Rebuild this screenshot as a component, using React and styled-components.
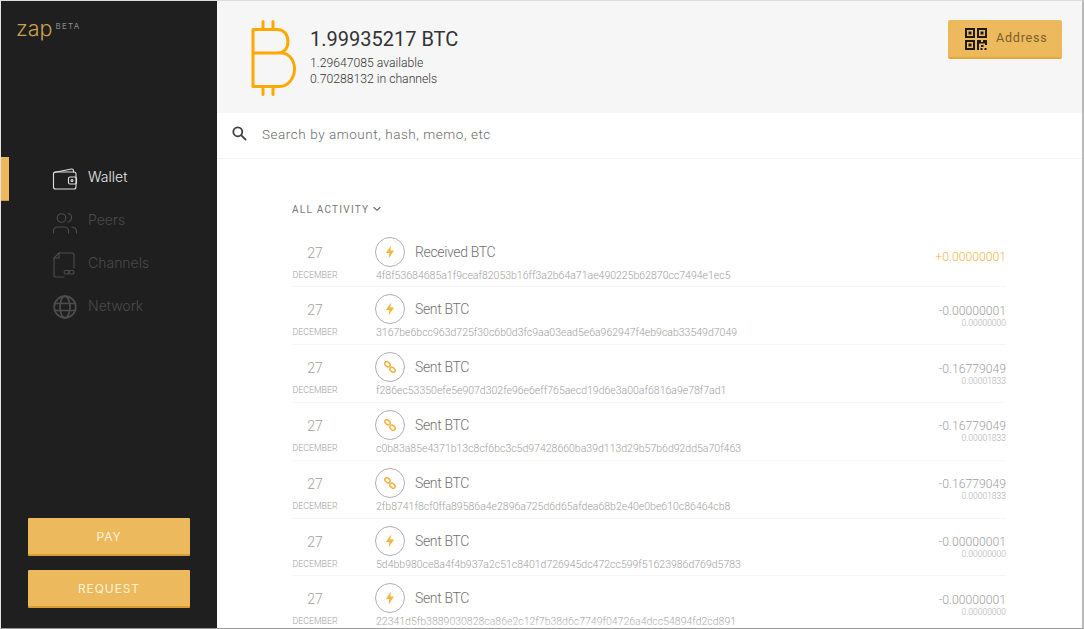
import React from 'react';
import styled, { createGlobalStyle } from 'styled-components';

const GlobalStyle = createGlobalStyle`
  html, body {
    margin: 0;
    padding: 0;
    background: #fff;
    overflow: hidden;
  }
  * {
    box-sizing: border-box;
  }
`

const Frame = styled.div`
  display: flex;
  width: 1084px;
  height: 629px;
  overflow: hidden;
  position: relative;
  font-family: Roboto, "Liberation Sans", sans-serif;
  background: #fff;
  border-top: 1px solid #dcdcdc;
  border-left: 1px solid #e4e4e4;
  border-right: 2px solid #b9b9b9;
  border-bottom: 1px solid #9a9a9a;
`

const Sidebar = styled.aside`
  display: flex;
  flex-direction: column;
  flex: 0 0 216px;
  background: #1f1f1f;
`

const Brand = styled.div`
  display: flex;
  align-items: flex-start;
  padding: 13px 0 0 15px;
  height: 156px;
`

const BrandName = styled.span`
  font-family: Inter, Roboto, sans-serif;
  font-size: 21.5px;
  font-weight: 300;
  line-height: 28px;
  color: #c9a04f;
`

const BrandTag = styled.span`
  font-family: Inter, Roboto, sans-serif;
  font-size: 8px;
  line-height: 10px;
  letter-spacing: 1.3px;
  margin: 7px 0 0 3px;
  color: #8a8a8a;
`

const Nav = styled.nav`
  display: flex;
  flex-direction: column;
`

const NavItem = styled.div`
  display: flex;
  align-items: center;
  height: 43px;
  padding: 0 0 4px 50px;
  gap: 9px;
  position: relative;
  font-family: Inter, Roboto, sans-serif;
  font-size: 14px;
  font-weight: 300;
  color: ${props => (props.active ? '#e8e8e8' : '#4a4a4a')};

  &::before {
    content: '';
    display: ${props => (props.active ? 'block' : 'none')};
    position: absolute;
    left: 0;
    top: 0;
    width: 8px;
    height: 43px;
    background: #ecb95c;
    border-bottom: 1px solid #c99a3e;
  }
`

const NavIcon = styled.svg`
  width: 28px;
  height: 28px;
  margin-top: 2px;
  fill: none;
  stroke: ${props => (props.active ? '#e0e0e0' : '#4d4d4d')};
  stroke-width: ${props => props.weight || 1.1};
  stroke-linecap: round;
  stroke-linejoin: round;
`

const SideActions = styled.div`
  display: flex;
  flex-direction: column;
  gap: 14px;
  margin-top: auto;
  padding: 0 27px 20px;
`

const ActionButton = styled.div`
  display: flex;
  align-items: center;
  justify-content: center;
  height: 38px;
  background: #ecb95c;
  border-bottom: 2px solid #dc9f2f;
  border-radius: 1px;
  font-family: Inter, Roboto, sans-serif;
  font-size: 12px;
  letter-spacing: 0.9px;
  color: #fdf3dc;
`

const Main = styled.main`
  display: flex;
  flex-direction: column;
  flex: 1;
  min-width: 0;
`

const Header = styled.header`
  display: flex;
  flex: 0 0 112px;
  padding: 19px 20px 0 33px;
  background: #f6f6f6;
`

const BtcLogo = styled.svg`
  width: 47px;
  height: 76px;
  fill: none;
  stroke: #ffa800;
  stroke-width: 3;
  stroke-linecap: round;
  stroke-linejoin: round;
`

const Balance = styled.div`
  display: flex;
  flex-direction: column;
  margin: 7px 0 0 13px;
`

const BalanceTotal = styled.div`
  font-size: 20px;
  line-height: 24px;
  color: #333;
  margin-bottom: 4px;
`

const BalanceLine = styled.div`
  font-size: 12.2px;
  font-weight: 300;
  line-height: 16px;
  color: #333;
`

const AddressButton = styled.div`
  display: flex;
  align-items: center;
  gap: 9px;
  width: 114px;
  height: 39px;
  margin-left: auto;
  padding-left: 17px;
  background: #ecb95c;
  border-bottom: 2px solid #e5a93a;
  border-radius: 2px;
  font-size: 12.5px;
  letter-spacing: 0.8px;
  color: #7a6030;
`

const AddressLabel = styled.span`
  margin-bottom: 2px;
`

const SearchBar = styled.div`
  display: flex;
  flex: 0 0 46px;
  align-items: center;
  gap: 15px;
  padding: 0 0 4px 15px;
  border-bottom: 1px solid #f1f1f1;
  font-size: 13.5px;
  font-weight: 300;
  letter-spacing: 0.55px;
  color: #6a6a6a;
`

const Activity = styled.section`
  display: flex;
  flex-direction: column;
  padding: 44px 76px 0 75px;
`

const ActivityLabel = styled.div`
  display: flex;
  align-items: center;
  gap: 4px;
  height: 12px;
  margin-bottom: 14.7px;
  font-size: 10px;
  letter-spacing: 1.25px;
  color: #777;
`

const Row = styled.div`
  display: flex;
  flex: 0 0 57.8px;
  height: 57.8px;
  padding-top: 7px;
  border-bottom: 1px solid #f6f6f6;
`

const DateCol = styled.div`
  display: flex;
  flex-direction: column;
  align-items: center;
  flex: 0 0 46px;
`

const Day = styled.div`
  font-size: 14px;
  font-weight: 300;
  line-height: 16px;
  margin-top: 8px;
  color: #a0a0a0;
`

const Month = styled.div`
  font-size: 8.8px;
  font-weight: 300;
  line-height: 10px;
  margin-top: 9px;
  color: #a0a0a0;
  white-space: nowrap;
`

const Details = styled.div`
  display: flex;
  flex-direction: column;
  margin-left: 38px;
`

const TitleLine = styled.div`
  display: flex;
  align-items: center;
  gap: 10px;
  height: 30px;
  margin-left: -1px;
  font-size: 14px;
  font-weight: 300;
  letter-spacing: -0.35px;
  color: #707070;
`

const TypeIcon = styled.div`
  display: flex;
  align-items: center;
  justify-content: center;
  width: 30px;
  height: 30px;
  border: 1px solid #b0b0b0;
  border-radius: 50%;
`

const Hash = styled.div`
  font-size: 10.5px;
  font-weight: 300;
  line-height: 12px;
  margin-top: 3px;
  color: #a0a0a0;
  white-space: nowrap;
`

const Amounts = styled.div`
  display: flex;
  flex-direction: column;
  align-items: flex-end;
  justify-content: center;
  margin-left: auto;
  padding-bottom: 8px;
`

const Amount = styled.div`
  font-size: 12.2px;
  font-weight: 300;
  line-height: 15px;
  color: ${props => (props.received ? '#f0b44a' : '#a0a0a0')};
`

const Fee = styled.div`
  font-size: 8.5px;
  font-weight: 300;
  line-height: 8px;
  color: #aaa;
`

const BottomFade = styled.div`
  position: absolute;
  left: 340px;
  bottom: 0;
  width: 420px;
  height: 8px;
  background: radial-gradient(ellipse at bottom, rgba(255, 255, 255, 0.5), rgba(255, 255, 255, 0));
  pointer-events: none;
`

const BoltIcon = () => (
  <svg width="10" height="14" viewBox="0 0 10 14">
    <path d="M6 0.5 L1 8 H4.4 L3.6 13.5 L9 5.6 H5.4 Z" fill="#f3b33f" />
  </svg>
)

const LinkIcon = () => (
  <svg width="12" height="12" viewBox="0 0 12 12" fill="none" stroke="#f3b33f" strokeWidth="1.5">
    <rect x="0.6" y="1.3" width="5.8" height="4" rx="2" transform="rotate(42 3.5 3.3)" />
    <rect x="5.6" y="6.7" width="5.8" height="4" rx="2" transform="rotate(42 8.5 8.7)" />
  </svg>
)

const WalletIcon = ({ active }) => (
  <NavIcon active={active} viewBox="0 0 28 28">
    <path d="M3 8.5 L20.5 5 Q22.5 4.8 22.5 7 V8" />
    <path d="M2.5 10 Q2.5 8 4.5 8 H23 Q25 8 25 10 V23 Q25 25 23 25 H4.5 Q2.5 25 2.5 23 Z" />
    <rect x="17.5" y="13" width="8" height="7" rx="1.5" />
    <circle cx="21" cy="16.5" r="1" />
  </NavIcon>
)

const PeersIcon = ({ active }) => (
  <NavIcon active={active} viewBox="0 0 28 28">
    <circle cx="10.5" cy="11" r="4.3" />
    <path d="M2.5 26 V24 Q2.5 20 7 20 H13 Q17.5 20 17.5 24 V26" />
    <path d="M17 6.5 Q20.5 7 20.5 10.5 Q20.5 14 17 15" />
    <path d="M21 20 Q25.5 20.5 25.5 24.5 V26" />
  </NavIcon>
)

const ChannelsIcon = ({ active }) => (
  <NavIcon active={active} viewBox="0 0 28 28">
    <path d="M8 3 H21 Q23 3 23 5 V18" />
    <path d="M8 3 L3 8 V25.5 Q3 27 4.5 27 H13" />
    <path d="M8 3 V8 H3" />
    <rect x="13" y="20.5" width="5.5" height="3.5" rx="1.7" />
    <rect x="17.5" y="20.5" width="5.5" height="3.5" rx="1.7" />
  </NavIcon>
)

const NetworkIcon = ({ active }) => (
  <NavIcon active={active} weight={1.7} viewBox="0 0 28 28">
    <circle cx="14" cy="14" r="10.8" />
    <ellipse cx="14" cy="14" rx="5" ry="10.8" />
    <path d="M3.6 10.5 H24.4 M3.6 17.5 H24.4" />
  </NavIcon>
)

const QrIcon = () => (
  <svg width="22" height="22" viewBox="0 0 22 22" fill="#1d1a12">
    <path fillRule="evenodd" d="M0 0H10V10H0Z M2 2V8H8V2Z M12 0H22V10H12Z M14 2V8H20V2Z M0 12H10V22H0Z M2 14V20H8V14Z" />
    <rect x="3.5" y="3.5" width="3" height="3" />
    <rect x="15.5" y="3.5" width="3" height="3" />
    <rect x="3.5" y="15.5" width="3" height="3" />
    <path d="M12 12H16V14H18V12H22V17H20V15.5H14V22H12Z" />
    <rect x="16" y="17" width="2.5" height="2" />
    <rect x="15.5" y="20" width="2" height="2" />
    <rect x="19.5" y="20" width="2" height="2" />
  </svg>
)

const SearchIcon = () => (
  <svg width="15" height="15" viewBox="0 0 15 15" fill="none" stroke="#3f3f3f" strokeWidth="1.8" strokeLinecap="round">
    <circle cx="5.8" cy="5.8" r="4.5" />
    <path d="M9.3 9.3 L13.6 13.6" />
  </svg>
)

const Chevron = () => (
  <svg width="8" height="6" viewBox="0 0 8 6" fill="none" stroke="#666" strokeWidth="1.1" strokeLinecap="round">
    <path d="M1 1.5 L4 4.3 L7 1.5" />
  </svg>
)

const navItems = [
  { label: 'Wallet', Icon: WalletIcon, active: true },
  { label: 'Peers', Icon: PeersIcon },
  { label: 'Channels', Icon: ChannelsIcon },
  { label: 'Network', Icon: NetworkIcon },
]

const transactions = [
  { title: 'Received BTC', kind: 'bolt', hash: '4f8f53684685a1f9ceaf82053b16ff3a2b64a71ae490225b62870cc7494e1ec5', amount: '+0.00000001', received: true },
  { title: 'Sent BTC', kind: 'bolt', hash: '3167be6bcc963d725f30c6b0d3fc9aa03ead5e6a962947f4eb9cab33549d7049', amount: '-0.00000001', fee: '0.00000000' },
  { title: 'Sent BTC', kind: 'link', hash: 'f286ec53350efe5e907d302fe96e6eff765aecd19d6e3a00af6816a9e78f7ad1', amount: '-0.16779049', fee: '0.00001833' },
  { title: 'Sent BTC', kind: 'link', hash: 'c0b83a85e4371b13c8cf6bc3c5d97428660ba39d113d29b57b6d92dd5a70f463', amount: '-0.16779049', fee: '0.00001833' },
  { title: 'Sent BTC', kind: 'link', hash: '2fb8741f8cf0ffa89586a4e2896a725d6d65afdea68b2e40e0be610c86464cb8', amount: '-0.16779049', fee: '0.00001833' },
  { title: 'Sent BTC', kind: 'bolt', hash: '5d4bb980ce8a4f4b937a2c51c8401d726945dc472cc599f51623986d769d5783', amount: '-0.00000001', fee: '0.00000000' },
  { title: 'Sent BTC', kind: 'bolt', hash: '22341d5fb3889030828ca86e2c12f7b38d6c7749f04726a4dcc54894fd2cd891', amount: '-0.00000001', fee: '0.00000000' },
]

export default function App() {
  return (
    <Frame>
      <GlobalStyle />
      <Sidebar>
        <Brand>
          <BrandName>zap</BrandName>
          <BrandTag>BETA</BrandTag>
        </Brand>
        <Nav>
          {navItems.map(({ label, Icon, active }) => (
            <NavItem key={label} active={active}>
              <Icon active={active} />
              {label}
            </NavItem>
          ))}
        </Nav>
        <SideActions>
          <ActionButton>PAY</ActionButton>
          <ActionButton>REQUEST</ActionButton>
        </SideActions>
      </Sidebar>
      <Main>
        <Header>
          <BtcLogo viewBox="0 0 47 76">
            <path d="M3 9.5 H27 C34 9.5 38 15 38 21.5 C38 28 34 33 28 33 H3 M28 33 H31 C39 33 44.5 40 44.5 49 C44.5 58 38 66.5 30 66.5 H3 V9.5" />
            <path d="M13 1.5 V9 M23 1.5 V9 M13 67 V74.5 M23 67 V74.5" />
          </BtcLogo>
          <Balance>
            <BalanceTotal>1.99935217 BTC</BalanceTotal>
            <BalanceLine>1.29647085 available</BalanceLine>
            <BalanceLine>0.70288132 in channels</BalanceLine>
          </Balance>
          <AddressButton>
            <QrIcon />
            <AddressLabel>Address</AddressLabel>
          </AddressButton>
        </Header>
        <SearchBar>
          <SearchIcon />
          Search by amount, hash, memo, etc
        </SearchBar>
        <Activity>
          <ActivityLabel>
            ALL ACTIVITY
            <Chevron />
          </ActivityLabel>
          {transactions.map(tx => (
            <Row key={tx.hash}>
              <DateCol>
                <Day>27</Day>
                <Month>DECEMBER</Month>
              </DateCol>
              <Details>
                <TitleLine>
                  <TypeIcon>{tx.kind === 'bolt' ? <BoltIcon /> : <LinkIcon />}</TypeIcon>
                  {tx.title}
                </TitleLine>
                <Hash>{tx.hash}</Hash>
              </Details>
              <Amounts>
                <Amount received={tx.received}>{tx.amount}</Amount>
                {tx.fee && <Fee>{tx.fee}</Fee>}
              </Amounts>
            </Row>
          ))}
        </Activity>
      </Main>
      <BottomFade />
    </Frame>
  )
}
